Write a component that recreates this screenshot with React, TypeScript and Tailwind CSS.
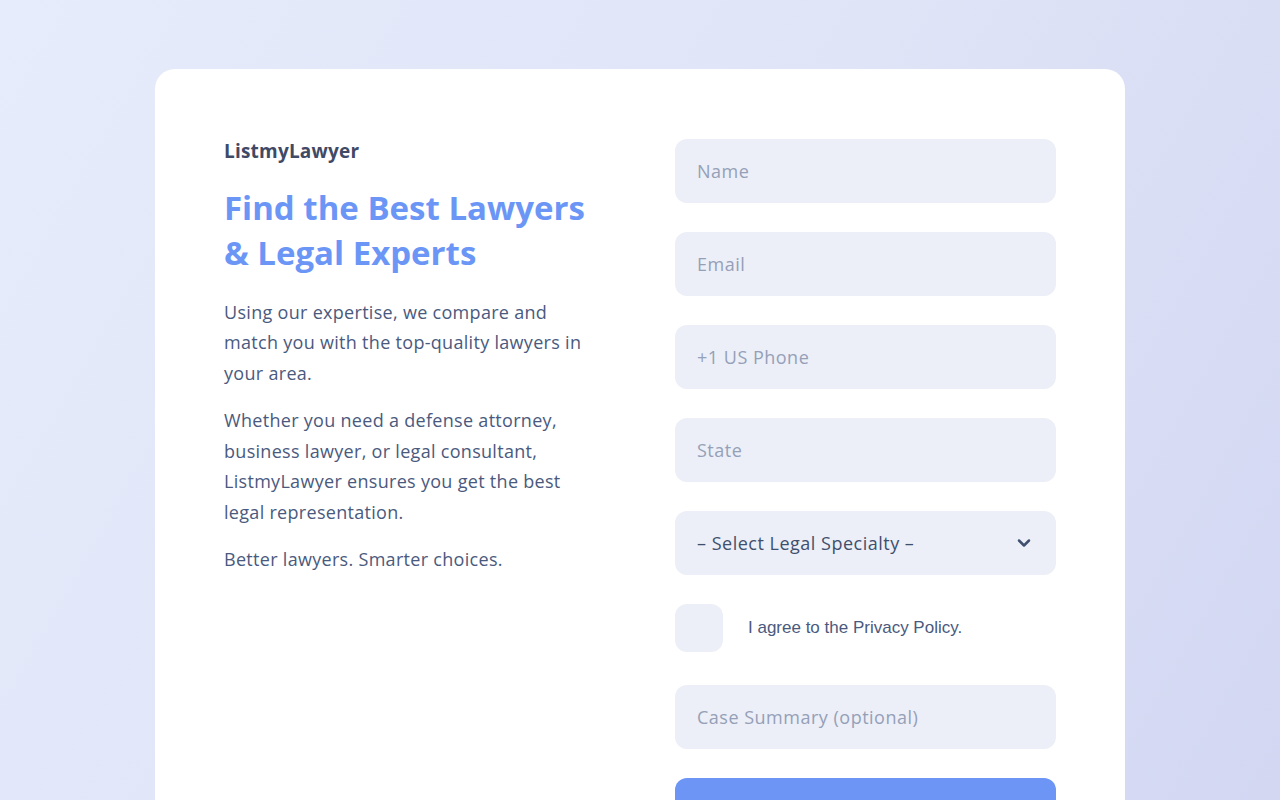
import { ChevronDown } from "lucide-react";

const fields = ["Name", "Email", "+1 US Phone", "State"];

const inputCls =
  "h-16 rounded-xl bg-[#eceff7] px-[22px] text-[18px] tracking-[0.5px] text-[#3f4f6e] outline-none placeholder:text-[#95a0b8]";

export default function App() {
  return (
    <div className="min-h-screen w-full bg-[linear-gradient(120deg,#e6ecfb_0%,#dfe4f7_50%,#d2d6f2_100%)] pt-[69px] font-['Open_Sans',sans-serif]">
      <div className="mx-auto w-[970px] rounded-[20px] bg-white px-[69px] pt-[70px] pb-10">
        <div className="grid grid-cols-[381px_381px] gap-[70px]">
          <div>
            <div className="-mt-[2px] text-[19px] font-bold tracking-[0.2px] text-[#3f4a66]">ListmyLawyer</div>
            <h1 className="mt-[19px] text-[33px] font-bold leading-[45px] text-[#6b96f6]">
              Find the Best Lawyers &amp; Legal Experts
            </h1>
            <div className="mt-[22px] space-y-[17px] text-[18px] leading-[30.5px] tracking-[0.3px] text-[#4a5a7e]">
              <p>Using our expertise, we compare and match you with the top-quality lawyers in your area.</p>
              <p>
                Whether you need a defense attorney, business lawyer, or legal consultant, ListmyLawyer ensures you get
                the best legal representation.
              </p>
              <p>Better lawyers. Smarter choices.</p>
            </div>
          </div>

          <form className="flex flex-col">
            {fields.map((f) => (
              <input key={f} placeholder={f} className={`mb-[29px] ${inputCls}`} />
            ))}
            <div className="flex h-16 items-center justify-between rounded-xl bg-[#eceff7] px-[22px] text-[18px] tracking-[0.5px] text-[#3f4f6e]">
              <span>– Select Legal Specialty –</span>
              <ChevronDown size={20} strokeWidth={3} className="text-[#3f4f6e]" />
            </div>
            <label className="mt-[29px] flex items-center gap-[25px] font-['Liberation_Sans',sans-serif] text-[17px] text-[#4a5a7e]">
              <span className="h-12 w-12 rounded-xl bg-[#eceff7]" />
              I agree to the Privacy Policy.
            </label>
            <input placeholder="Case Summary (optional)" className={`mt-[33px] ${inputCls}`} />
            <button type="button" className="mt-[29px] h-16 rounded-xl bg-[#6c95f6] text-[18px] font-bold text-white">
              Find My Lawyer
            </button>
          </form>
        </div>
      </div>
    </div>
  );
}
